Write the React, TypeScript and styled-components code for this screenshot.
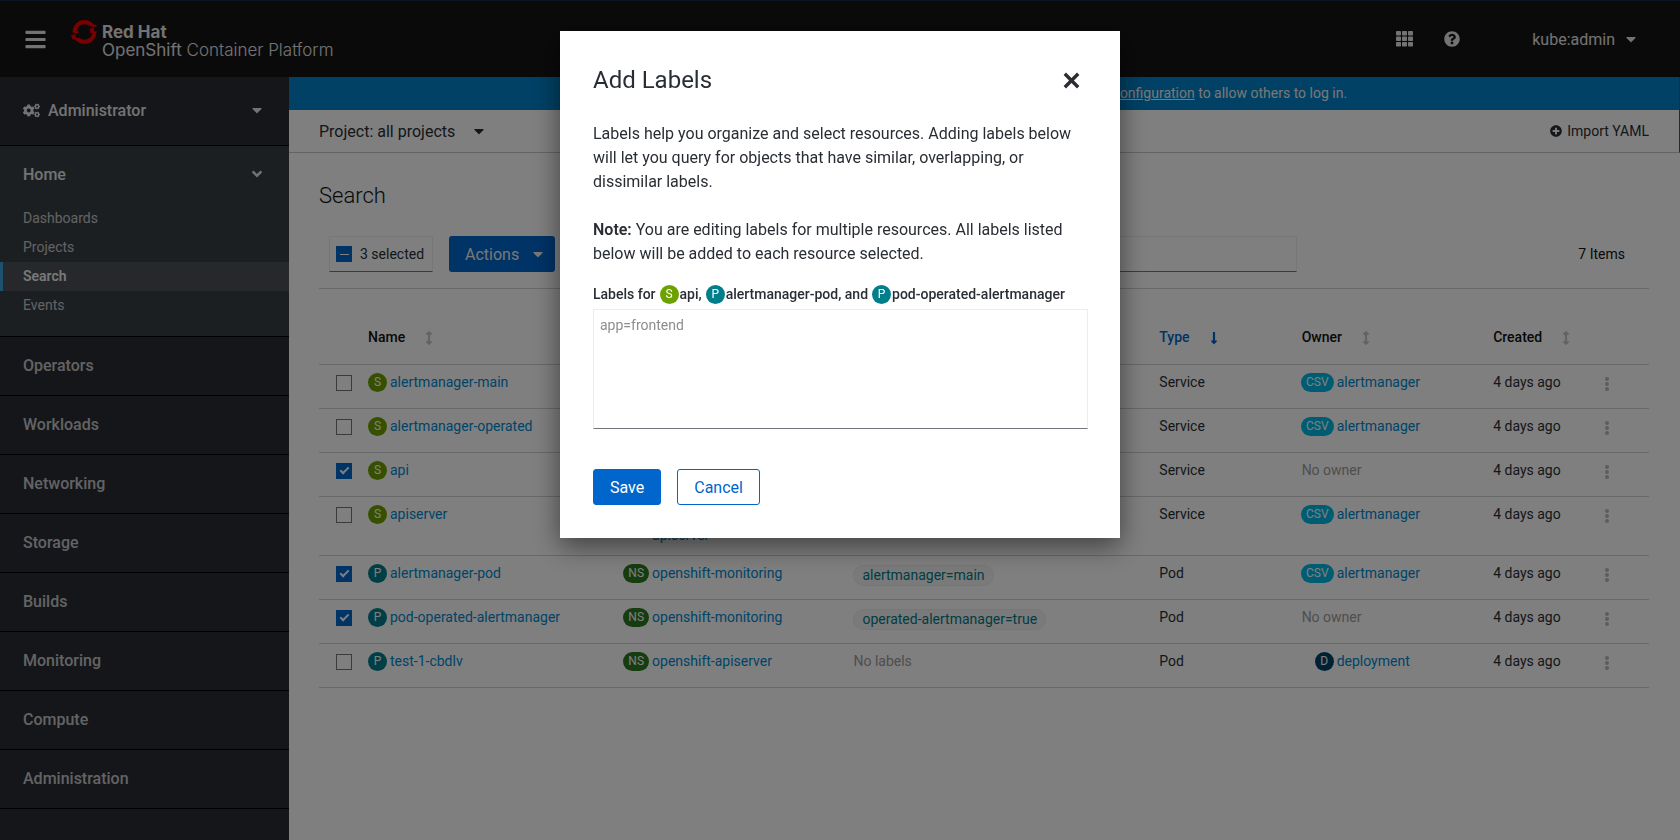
import React from "react";
import styled, { createGlobalStyle } from "styled-components";
import {
  FaAngleDown,
  FaArrowsAltV,
  FaBars,
  FaCaretDown,
  FaCogs,
  FaLongArrowAltDown,
  FaPlusCircle,
  FaQuestionCircle,
} from "react-icons/fa";
import { SiRedhatopenshift } from "react-icons/si";

const GlobalStyle = createGlobalStyle`
  *, *::before, *::after { box-sizing: border-box; }
  body {
    margin: 0;
    background: #fff;
    color: #292e34;
    font-family: Roboto, "Liberation Sans", sans-serif;
    font-size: 14px;
    line-height: 21px;
  }
  button, input, textarea { font: inherit; color: inherit; }
  button { cursor: pointer; }
  a { color: #0088ce; text-decoration: none; }
  h1, h2, p { margin: 0; padding: 0; }
  svg { display: block; flex: none; }
`;

const Page = styled.div`
  display: flex;
  flex-direction: column;
  min-height: 100vh;
`;

const Masthead = styled.header`
  display: flex;
  align-items: center;
  height: 77px;
  padding: 0 41px 0 24px;
  background: #151515;
  border-top: 1px solid #14284b;
  color: #e6e6e6;
`;

const BareButton = styled.button`
  display: inline-flex;
  align-items: center;
  padding: 0;
  border: 0;
  background: none;
`;

const Brand = styled.div`
  display: flex;
  align-items: flex-start;
  gap: 5px;
  flex: 1;
  margin-left: 24px;
  font-family: Inter, sans-serif;
  font-size: 17px;
  line-height: 18px;
`;

const BrandName = styled.div`
  display: flex;
  flex-direction: column;
  padding-top: 4px;
  font-weight: 400;
`;

const BrandBold = styled.span`
  font-weight: 700;
`;

const BrandLight = styled.span`
  font-weight: 300;
`;

const Tools = styled.div`
  display: flex;
  align-items: center;
  font-size: 16px;
`;

const HelpButton = styled(BareButton)`
  margin-left: 31px;
`;

const UserButton = styled(BareButton)`
  gap: 8px;
  margin-left: 72px;
`;

const Body = styled.div`
  display: flex;
  flex: 1;
`;

const Sidebar = styled.nav`
  flex: none;
  width: 289px;
  background: #2a2d34;
  font-size: 16px;
  font-weight: 500;
`;

const NavButton = styled.button<{ $tall?: boolean; $bright?: boolean }>`
  display: flex;
  align-items: center;
  width: 100%;
  height: ${(p) => (p.$tall ? 69 : 59)}px;
  padding: 0 24px 2px 23px;
  border: 0;
  border-bottom: 1px solid #000;
  background: none;
  color: ${(p) => (p.$bright ? "#e6e6e6" : "#c6c7c9")};
  text-align: left;
`;

const NavText = styled.span`
  flex: 1;
`;

const RoleText = styled(NavText)`
  padding-left: 8px;
`;

const OpenSection = styled.div`
  padding-bottom: 16px;
  background: #383f45;
  border-bottom: 1px solid #000;
`;

const SectionButton = styled(NavButton)`
  height: 58px;
  border-bottom: 0;
`;

const SubLink = styled.a<{ $current?: boolean }>`
  display: flex;
  align-items: center;
  height: 29px;
  padding-left: 20px;
  border-left: 3px solid ${(p) => (p.$current ? "#39a5dc" : "transparent")};
  background: ${(p) => (p.$current ? "#4d5057" : "transparent")};
  color: ${(p) => (p.$current ? "#f0f0f0" : "#c6c7c9")};
  font-size: 14px;
  font-weight: ${(p) => (p.$current ? 600 : 400)};
`;

const Main = styled.main`
  flex: 1;
  min-width: 0;
`;

const Banner = styled.p`
  padding: 6px 0;
  background: #0083ca;
  border-right: 1px solid #555;
  color: #f0f0f0;
  text-align: center;

  a {
    color: inherit;
    text-decoration: underline;
  }
`;

const ProjectBar = styled.div`
  display: flex;
  align-items: center;
  justify-content: space-between;
  height: 43px;
  padding: 0 30px;
  border-right: 1px solid #555;
  border-bottom: 1px solid #c8c8c8;
`;

const ProjectButton = styled(BareButton)`
  gap: 16px;
  font-size: 16px;
`;

const ImportButton = styled(BareButton)`
  gap: 5px;
`;

const Content = styled.section`
  padding: 28px 31px 28px 30px;
`;

const PageTitle = styled.h1`
  font-size: 22px;
  font-weight: 300;
  line-height: 30px;
  color: #111;
`;

const Toolbar = styled.div`
  display: flex;
  align-items: center;
  padding: 25px 24px 16px 10px;
  border-bottom: 1px solid #d1d1d1;
`;

const SelectedBox = styled.label`
  display: flex;
  align-items: center;
  gap: 8px;
  height: 36px;
  padding: 0 8px 0 6px;
  border: 1px solid #ededed;
  border-bottom-color: #72767b;
`;

const ActionsButton = styled.button`
  display: flex;
  align-items: center;
  gap: 11px;
  height: 36px;
  margin-left: 16px;
  padding: 0 9px 0 16px;
  border: 0;
  border-radius: 3px;
  background: #0066cc;
  color: #f0f0f0;
  font-size: 16px;
`;

const FilterInput = styled.input`
  width: 56%;
  height: 36px;
  margin-left: 16px;
  padding: 0 8px;
  border: 1px solid #ededed;
  border-bottom-color: #72767b;
  background: none;
`;

const ItemCount = styled.span`
  margin-left: auto;
  color: #111;
`;

const Checkbox = styled.input`
  appearance: none;
  display: grid;
  place-content: center;
  flex: none;
  width: 16px;
  height: 16px;
  margin: 0;
  border: 1px solid #72767b;

  &:checked {
    border-color: #0066cc;
    background: #0066cc;
  }

  &:checked::after {
    content: "";
    width: 9px;
    height: 5px;
    margin-bottom: 3px;
    border: solid #fff;
    border-width: 0 0 2px 2px;
    transform: rotate(-45deg);
  }
`;

const MixedCheckbox = styled(Checkbox)`
  &:checked::after {
    height: 1px;
    margin-bottom: 0;
    border-width: 0 0 1px;
    transform: none;
  }
`;

const Table = styled.table`
  width: 100%;
  border-collapse: separate;
  border-spacing: 0;
  table-layout: fixed;
`;

const HeadCell = styled.th`
  height: 76px;
  padding: 22px 0 0;
  border-bottom: 1px solid #d1d1d1;
  color: #111;
  font-weight: 500;
  text-align: left;
`;

const SortButton = styled(BareButton)<{ $active?: boolean }>`
  gap: 17px;
  color: ${(p) => (p.$active ? "#0066cc" : "#111")};

  svg {
    color: ${(p) => (p.$active ? "#0066cc" : "#c7c7c7")};
  }
`;

const Cell = styled.td<{ $edge?: number }>`
  height: 44px;
  padding: 7px 0 9px ${(p) => p.$edge ?? 0}px;
  border-bottom: 1px solid #d1d1d1;
  vertical-align: top;
`;

const CheckCell = styled(Cell)`
  padding-top: 10px;
`;

const Resource = styled.span`
  display: flex;
  align-items: flex-start;
  gap: 3px;
  white-space: pre-line;
`;

const OwnerSlot = styled.span`
  display: flex;
  justify-content: flex-end;
  width: 32px;
`;

const Badge = styled.span<{ $color: string }>`
  display: inline-flex;
  align-items: center;
  justify-content: center;
  flex: none;
  min-width: 19px;
  height: 19px;
  margin-top: 1px;
  padding: 0 5px;
  border-radius: 10px;
  background: ${(p) => p.$color};
  color: #fff;
  font-size: 12px;
  font-weight: 400;
`;

const LabelChip = styled.span`
  display: inline-flex;
  align-items: center;
  height: 21px;
  margin-top: 2px;
  padding: 0 8px;
  border: 1px solid #ededed;
  border-radius: 11px;
  background: #f5f5f5;
  color: #007a87;
`;

const Muted = styled.span`
  color: #9c9c9c;
`;

const Kebab = styled(BareButton)`
  margin-top: 5px;
  color: #bbb;
`;

const Backdrop = styled.div`
  position: fixed;
  inset: 0;
  display: flex;
  align-items: flex-start;
  justify-content: center;
  padding-top: 31px;
  background: rgba(0, 0, 0, 0.5);
`;

const Modal = styled.form`
  width: 560px;
  padding: 33px 32px 33px 33px;
  background: #fff;
  box-shadow: 0 8px 25px rgba(0, 0, 0, 0.5);
  color: #292e34;
`;

const ModalHead = styled.div`
  display: flex;
  align-items: center;
  justify-content: space-between;
  padding-right: 8px;
  margin-bottom: 26px;
`;

const ModalTitle = styled.h2`
  font-size: 24px;
  font-weight: 400;
  line-height: 32px;
`;

const ModalText = styled.p`
  font-size: 16px;
  line-height: 24px;

  & + & {
    margin-top: 24px;
  }

  strong {
    font-weight: 600;
  }
`;

const FieldLabel = styled.label`
  display: flex;
  align-items: center;
  gap: 1px;
  height: 22px;
  margin-top: 17px;
  font-weight: 500;
`;

const LabelWord = styled.span`
  margin-right: 3px;
`;

const LabelArea = styled.textarea`
  display: block;
  width: 100%;
  height: 120px;
  margin-top: 4px;
  padding: 5px 6px;
  border: 1px solid #ededed;
  border-bottom-color: #72767b;
  resize: none;

  &::placeholder {
    color: #8b8d8f;
  }
`;

const ModalActions = styled.div`
  display: flex;
  gap: 16px;
  margin-top: 40px;
`;

const ModalButton = styled.button<{ $primary?: boolean }>`
  height: 36px;
  padding: 0 16px;
  border: 1px solid #0066cc;
  border-radius: 3px;
  background: ${(p) => (p.$primary ? "#0066cc" : "#fff")};
  color: ${(p) => (p.$primary ? "#fff" : "#0066cc")};
  font-size: 16px;
`;

const KINDS: Record<string, string> = {
  S: "#6ca100",
  P: "#007e8a",
  NS: "#2b7a1f",
  CSV: "#00b9e4",
  D: "#004368",
};

const KindBadge = ({ kind }: { kind: string }) => (
  <Badge $color={KINDS[kind]}>{kind}</Badge>
);

type Row = {
  kind: "S" | "P";
  name: string;
  namespace: string;
  label?: string;
  owner?: { kind: string; name: string };
  checked?: boolean;
};

const csv = { kind: "CSV", name: "alertmanager" };

const ROWS: Row[] = [
  { kind: "S", name: "alertmanager-main", namespace: "openshift-monitoring", label: "alertmanager=main", owner: csv },
  { kind: "S", name: "alertmanager-operated", namespace: "openshift-monitoring", label: "operated-alertmanager=true", owner: csv },
  { kind: "S", name: "api", namespace: "openshift-apiserver", checked: true },
  { kind: "S", name: "apiserver", namespace: "openshift-kube-\napiserver", owner: csv },
  { kind: "P", name: "alertmanager-pod", namespace: "openshift-monitoring", label: "alertmanager=main", owner: csv, checked: true },
  { kind: "P", name: "pod-operated-alertmanager", namespace: "openshift-monitoring", label: "operated-alertmanager=true", checked: true },
  { kind: "P", name: "test-1-cbdlv", namespace: "openshift-apiserver", owner: { kind: "D", name: "deployment" } },
];

const COLUMNS = [
  { title: "Name", width: "19.2%" },
  { title: "Namespace", width: "17.3%" },
  { title: "Labels", width: "23%" },
  { title: "Type", width: "10.7%" },
  { title: "Owner", width: "14.4%" },
  { title: "Created", width: "8.2%" },
];

const GridIcon = () => (
  <svg width="17" height="16" viewBox="0 0 17 16" fill="currentColor">
    {[0, 6, 12].map((x) =>
      [0, 5.5, 11].map((y) => (
        <rect key={`${x}-${y}`} x={x} y={y} width="5" height="4.5" rx="0.8" />
      ))
    )}
  </svg>
);

const CloseIcon = () => (
  <svg width="17" height="17" viewBox="0 0 17 17" fill="none" stroke="currentColor" strokeWidth="3.4">
    <path d="M1.8 1.8 15.2 15.2M15.2 1.8 1.8 15.2" />
  </svg>
);

const KebabIcon = () => (
  <svg width="4" height="14" viewBox="0 0 4 14" fill="currentColor">
    <circle cx="2" cy="2" r="2" />
    <circle cx="2" cy="7" r="2" />
    <circle cx="2" cy="12" r="2" />
  </svg>
);

const noop = () => {};

export default function App() {
  return (
    <>
      <GlobalStyle />
      <Page>
        <Masthead>
          <BareButton aria-label="Toggle navigation">
            <FaBars size={23} />
          </BareButton>
          <Brand>
            <SiRedhatopenshift size={26} color="#f00000" />
            <BrandName>
              <BrandBold>Red Hat</BrandBold>
              <span>
                OpenShift <BrandLight>Container Platform</BrandLight>
              </span>
            </BrandName>
          </Brand>
          <Tools>
            <BareButton aria-label="Applications">
              <GridIcon />
            </BareButton>
            <HelpButton aria-label="Help">
              <FaQuestionCircle size={16} />
            </HelpButton>
            <UserButton>
              kube:admin <FaCaretDown size={16} />
            </UserButton>
          </Tools>
        </Masthead>
        <Body>
          <Sidebar aria-label="Main">
            <NavButton $tall $bright>
              <FaCogs size={17} />
              <RoleText>Administrator</RoleText>
              <FaCaretDown size={16} />
            </NavButton>
            <OpenSection>
              <SectionButton $bright>
                <NavText>Home</NavText>
                <FaAngleDown size={16} />
              </SectionButton>
              {["Dashboards", "Projects", "Search", "Events"].map((item) => (
                <SubLink key={item} href="#" $current={item === "Search"}>
                  {item}
                </SubLink>
              ))}
            </OpenSection>
            {["Operators", "Workloads", "Networking", "Storage", "Builds", "Monitoring", "Compute", "Administration"].map(
              (item) => (
                <NavButton key={item}>{item}</NavButton>
              )
            )}
          </Sidebar>
          <Main>
            <Banner>
              You are logged in as a temporary administrative user. Update the{" "}
              <a href="#">cluster OAuth configuration</a> to allow others to log in.
            </Banner>
            <ProjectBar>
              <ProjectButton>
                Project: all projects <FaCaretDown size={16} />
              </ProjectButton>
              <ImportButton>
                <FaPlusCircle size={12} /> Import YAML
              </ImportButton>
            </ProjectBar>
            <Content>
              <PageTitle>Search</PageTitle>
              <Toolbar>
                <SelectedBox>
                  <MixedCheckbox type="checkbox" checked onChange={noop} />3 selected
                </SelectedBox>
                <ActionsButton>
                  Actions <FaCaretDown size={16} />
                </ActionsButton>
                <FilterInput type="text" aria-label="Filter by name" />
                <ItemCount>7 Items</ItemCount>
              </Toolbar>
              <Table>
                <colgroup>
                  <col width="49" />
                  {COLUMNS.map((c) => (
                    <col key={c.title} width={c.width} />
                  ))}
                  <col />
                </colgroup>
                <thead>
                  <tr>
                    <HeadCell />
                    {COLUMNS.map(({ title }) => (
                      <HeadCell key={title} scope="col">
                        <SortButton $active={title === "Type"}>
                          {title}
                          {title === "Type" ? <FaLongArrowAltDown size={14} /> : <FaArrowsAltV size={14} />}
                        </SortButton>
                      </HeadCell>
                    ))}
                    <HeadCell />
                  </tr>
                </thead>
                <tbody>
                  {ROWS.map((row) => (
                    <tr key={row.name}>
                      <CheckCell $edge={17}>
                        <Checkbox
                          type="checkbox"
                          aria-label={`Select ${row.name}`}
                          defaultChecked={row.checked}
                        />
                      </CheckCell>
                      <Cell>
                        <Resource>
                          <KindBadge kind={row.kind} />
                          <a href="#">{row.name}</a>
                        </Resource>
                      </Cell>
                      <Cell>
                        <Resource>
                          <KindBadge kind="NS" />
                          <a href="#">{row.namespace}</a>
                        </Resource>
                      </Cell>
                      <Cell>{row.label ? <LabelChip>{row.label}</LabelChip> : <Muted>No labels</Muted>}</Cell>
                      <Cell>{row.kind === "S" ? "Service" : "Pod"}</Cell>
                      <Cell>
                        {row.owner ? (
                          <Resource>
                            <OwnerSlot>
                              <KindBadge kind={row.owner.kind} />
                            </OwnerSlot>
                            <a href="#">{row.owner.name}</a>
                          </Resource>
                        ) : (
                          <Muted>No owner</Muted>
                        )}
                      </Cell>
                      <Cell>4 days ago</Cell>
                      <Cell $edge={3}>
                        <Kebab aria-label={`Actions for ${row.name}`}>
                          <KebabIcon />
                        </Kebab>
                      </Cell>
                    </tr>
                  ))}
                </tbody>
              </Table>
            </Content>
          </Main>
        </Body>
      </Page>
      <Backdrop>
        <Modal role="dialog" aria-labelledby="add-labels-title">
          <ModalHead>
            <ModalTitle id="add-labels-title">Add Labels</ModalTitle>
            <BareButton type="button" aria-label="Close">
              <CloseIcon />
            </BareButton>
          </ModalHead>
          <ModalText>
            Labels help you organize and select resources. Adding labels below will let you query for objects that
            have similar, overlapping, or dissimilar labels.
          </ModalText>
          <ModalText>
            <strong>Note:</strong> You are editing labels for multiple resources. All labels listed below will be
            added to each resource selected.
          </ModalText>
          <FieldLabel htmlFor="labels">
            <LabelWord>Labels for</LabelWord>
            <KindBadge kind="S" />
            <LabelWord>api,</LabelWord>
            <KindBadge kind="P" />
            <LabelWord>alertmanager-pod, and</LabelWord>
            <KindBadge kind="P" />
            <span>pod-operated-alertmanager</span>
          </FieldLabel>
          <LabelArea id="labels" placeholder="app=frontend" />
          <ModalActions>
            <ModalButton $primary type="button">
              Save
            </ModalButton>
            <ModalButton type="button">Cancel</ModalButton>
          </ModalActions>
        </Modal>
      </Backdrop>
    </>
  );
}
